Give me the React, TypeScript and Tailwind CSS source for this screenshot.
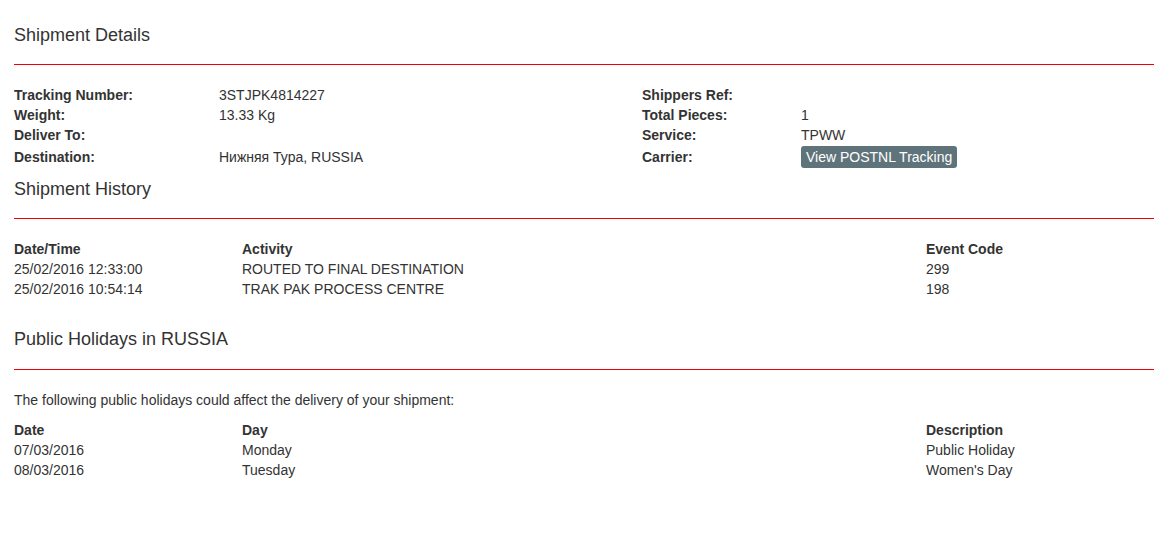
const details: [string, string, string, React.ReactNode][] = [
  ['Tracking Number:', '3STJPK4814227', 'Shippers Ref:', ''],
  ['Weight:', '13.33 Kg', 'Total Pieces:', '1'],
  ['Deliver To:', '', 'Service:', 'TPWW'],
  [
    'Destination:',
    'Нижняя Тура, RUSSIA',
    'Carrier:',
    <span className="inline-block rounded-[3px] bg-[#5f737a] px-[5px] leading-[22px] text-white">
      View POSTNL Tracking
    </span>,
  ],
]

const history = [
  ['25/02/2016 12:33:00', 'ROUTED TO FINAL DESTINATION', '299'],
  ['25/02/2016 10:54:14', 'TRAK PAK PROCESS CENTRE', '198'],
]

const holidays = [
  ['07/03/2016', 'Monday', 'Public Holiday'],
  ['08/03/2016', 'Tuesday', "Women's Day"],
]

function Heading({ children, gap = 'mt-[19px]' }: { children: React.ReactNode; gap?: string }) {
  return (
    <>
      <h4 className="text-[18px] leading-[20px] font-normal">{children}</h4>
      <div className={`${gap} mb-[20px] h-px bg-[#f00000]`} />
    </>
  )
}

function Table({ head, rows }: { head: string[]; rows: string[][] }) {
  return (
    <div className="grid grid-cols-[228px_684px_1fr] leading-[20px]">
      {head.map((h) => (
        <div key={h} className="font-bold">
          {h}
        </div>
      ))}
      {rows.map((r) => r.map((c, i) => <div key={i}>{c}</div>))}
    </div>
  )
}

export default function App() {
  return (
    <div
      className="w-[1173px] bg-white pt-[25px] pl-[14px] pr-[19px] text-[14px] text-[#333]"
      style={{ fontFamily: '"Liberation Sans", Arial, sans-serif' }}
    >
      <Heading>Shipment Details</Heading>
      <div className="grid grid-cols-[205px_423px_159px_1fr] leading-[20px]">
        {details.map((row, ri) =>
          row.map((c, i) => (
            <div
              key={`${ri}-${i}`}
              className={`flex items-center ${ri === 3 ? 'h-[22px] mt-px' : 'h-[20px]'} ${i % 2 === 0 ? 'font-bold' : ''}`}
            >
              {c}
            </div>
          )),
        )}
      </div>

      <div className="mt-[11px]">
        <Heading>Shipment History</Heading>
        <Table head={['Date/Time', 'Activity', 'Event Code']} rows={history} />
      </div>

      <div className="mt-[30px]">
        <Heading gap="mt-[20px]">Public Holidays in RUSSIA</Heading>
        <p className="mb-[10px] leading-[20px]">
          The following public holidays could affect the delivery of your shipment:
        </p>
        <Table head={['Date', 'Day', 'Description']} rows={holidays} />
      </div>
    </div>
  )
}
